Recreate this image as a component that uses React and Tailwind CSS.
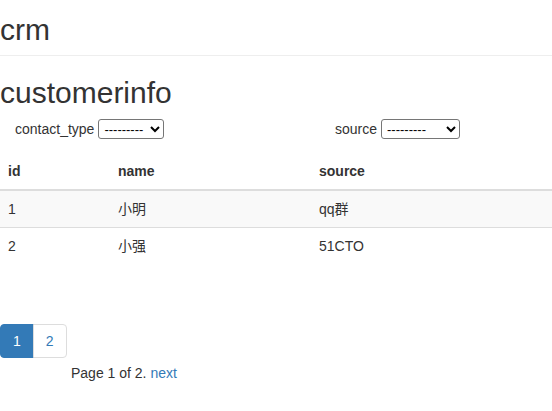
import React from 'react';

const rows = [
  { id: 1, name: '小明', source: 'qq群' },
  { id: 2, name: '小强', source: '51CTO' },
];

const FilterSelect = ({ width }) => (
  <select
    className={`${width} h-[20px] border border-[#767676] rounded-[3px] bg-white text-[13px] text-black pl-[1px]`}
    defaultValue=""
  >
    <option value="">---------</option>
  </select>
);

const App = () => {
  return (
    <div className="min-h-screen bg-white text-[#333] text-[14px] leading-[20px] font-['Liberation_Sans','Noto_Sans_CJK_SC',sans-serif]">
      <div className="h-[56px] border-b border-[#eee] pt-[13px]">
        <div className="text-[30px] leading-[33px]">crm</div>
      </div>

      <h1 className="mt-[20px] mb-[10px] text-[30px] leading-[33px] font-normal">customerinfo</h1>

      <div className="flex items-center h-[20px]">
        <div className="w-[320px] flex items-center pl-[15px]">
          <span className="mr-[4px]">contact_type</span>
          <FilterSelect width="w-[66px]" />
        </div>
        <div className="flex items-center pl-[15px]">
          <span className="mr-[4px]">source</span>
          <FilterSelect width="w-[79px]" />
        </div>
      </div>

      <table className="w-full mt-[14px] border-collapse">
        <thead>
          <tr>
            <th className="w-[110px] text-left font-bold p-[8px] border-b-2 border-[#ddd]">id</th>
            <th className="w-[201px] text-left font-bold p-[8px] border-b-2 border-[#ddd]">name</th>
            <th className="text-left font-bold p-[8px] border-b-2 border-[#ddd]">source</th>
          </tr>
        </thead>
        <tbody>
          {rows.map((r, i) => (
            <tr key={r.id} className={i % 2 === 0 ? 'bg-[#f9f9f9]' : ''}>
              <td className={`p-[8px] ${i > 0 ? 'border-t border-[#ddd]' : ''}`}>{r.id}</td>
              <td className={`p-[8px] ${i > 0 ? 'border-t border-[#ddd]' : ''}`}>{r.name}</td>
              <td className={`p-[8px] ${i > 0 ? 'border-t border-[#ddd]' : ''}`}>{r.source}</td>
            </tr>
          ))}
        </tbody>
      </table>

      <div className="mt-[60px] flex">
        <span className="h-[34px] px-[12px] py-[6px] bg-[#337ab7] border border-[#337ab7] text-white rounded-l-[4px]">1</span>
        <a className="h-[34px] px-[12px] py-[6px] border border-[#ddd] -ml-px text-[#337ab7] rounded-r-[4px]" href="#">2</a>
      </div>

      <div className="mt-[5px] ml-[71px]">
        Page 1 of 2. <a className="text-[#337ab7]" href="#">next</a>
      </div>
    </div>
  );
};

export default App;
